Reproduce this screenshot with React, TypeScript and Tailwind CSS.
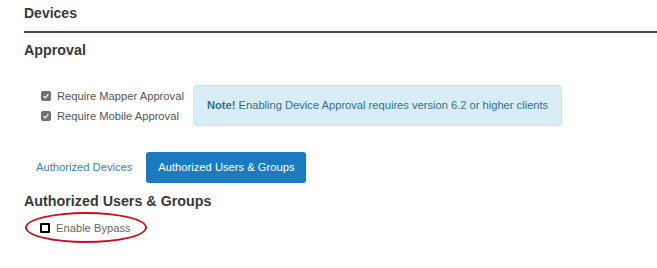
import React from "react";

const CheckedBox: React.FC = () => (
  <span className="flex h-[10px] w-[10px] items-center justify-center rounded-[2px] bg-[#707070]">
    <svg viewBox="0 0 10 10" className="h-[8px] w-[8px]" fill="none">
      <path d="M2 5.2 4.1 7.3 8 2.8" stroke="#fff" strokeWidth="1.6" />
    </svg>
  </span>
);

const App: React.FC = () => {
  const approvals = ["Require Mapper Approval", "Require Mobile Approval"];

  return (
    <div className="h-[268px] w-[657px] bg-white pl-[24px] font-['Liberation_Sans',Arial,sans-serif] text-[#383838]">
      <div className="h-[31px] pt-[6px] text-[14px] font-bold leading-[14px]">
        Devices
      </div>
      <div className="h-[2px] bg-[#4a4a4a]" />

      <div className="mt-[10px] h-[14px] text-[14.3px] font-bold leading-[14px]">
        Approval
      </div>

      <div className="mt-[28px] flex items-start">
        <div className="ml-[17px] mt-[1px] w-[152px]">
          {approvals.map((label) => (
            <label
              key={label}
              className="flex h-[20px] items-center gap-[6px] text-[11.2px] text-[#555]"
            >
              <CheckedBox />
              {label}
            </label>
          ))}
        </div>
        <div className="flex h-[41px] w-[369px] items-center whitespace-nowrap rounded-[4px] border border-[#bce8f1] bg-[#d9edf7] px-[13px] text-[11.15px] text-[#31708f]">
          <p>
            <span className="font-bold">Note!</span> Enabling Device Approval
            requires version 6.2 or higher clients
          </p>
        </div>
      </div>

      <div className="mt-[26px] flex items-center gap-[2px]">
        <button className="h-[31px] px-[12px] text-[11.2px] text-[#3c80c6]">
          Authorized Devices
        </button>
        <button className="h-[31px] w-[160px] rounded-[3px] bg-[#1b7bc0] text-[11.2px] text-white">
          Authorized Users &amp; Groups
        </button>
      </div>

      <div className="mt-[11px] h-[14px] text-[14.3px] font-bold leading-[14px]">
        Authorized Users &amp; Groups
      </div>

      <div className="relative mt-[10px] flex h-[20px] items-center">
        <label className="ml-[16px] flex items-center gap-[6px] text-[11.2px] text-[#666]">
          <span className="h-[10px] w-[10px] rounded-[1px] border-2 border-black bg-white" />
          Enable Bypass
        </label>
        <span className="pointer-events-none absolute left-[1px] top-[-6px] h-[31px] w-[122px] rounded-[50%] border-2 border-[#c4121c]" />
      </div>
    </div>
  );
};

export default App;
